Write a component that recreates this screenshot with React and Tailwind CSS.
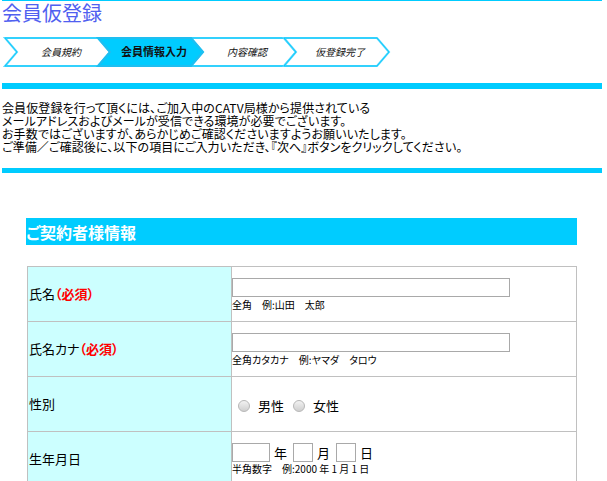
import React from 'react';

const steps = [
  { label: '会員規約', active: false },
  { label: '会員情報入力', active: true },
  { label: '内容確認', active: false },
  { label: '仮登録完了', active: false }
];

const introLines = [
  '会員仮登録を行って頂くには、ご加入中のCATV局様から提供されている',
  'メールアドレスおよびメールが受信できる環境が必要でございます。',
  'お手数ではございますが、あらかじめご確認くださいますようお願いいたします。',
  'ご準備／ご確認後に、以下の項目にご入力いただき、『次へ』ボタンをクリックしてください。'
];

function chevron(x) {
  return `${x},1 ${x + 93},1 ${x + 105},15 ${x + 93},29 ${x},29 ${x + 12},15`;
}

function StepBar() {
  const order = steps.map((s, i) => ({ ...s, i })).sort((a, b) => Number(a.active) - Number(b.active));
  return (
    <svg width="400" height="31" viewBox="0 0 400 31" className="block">
      {order.map((s) => {
        const x = 3 + s.i * 93;
        return (
          <g key={s.i}>
            <polygon
              points={chevron(x)}
              fill={s.active ? '#00ccff' : '#ffffff'}
              stroke={s.active ? '#1fbef0' : '#55d8ff'}
              strokeWidth="2"
              strokeLinejoin="miter"
            />
            {!s.active && (
              <polygon points={chevron(x)} fill="none" stroke="#00c8fa" strokeWidth="0.8" />
            )}
            <text
              x={x + 56}
              y="19"
              textAnchor="middle"
              fontSize={s.active ? 11 : 10}
              fontWeight={s.active ? 'bold' : 'normal'}
              fontStyle={s.active ? 'normal' : 'italic'}
              fill="#111"
              style={{ fontFamily: "'Noto Sans CJK JP', sans-serif" }}
            >
              {s.label}
            </text>
          </g>
        );
      })}
    </svg>
  );
}

function Radio() {
  return (
    <span className="inline-block w-[12px] h-[12px] rounded-full border border-[#b8b8b8] bg-gradient-to-b from-[#f2f2f2] to-[#cfcfcf]" />
  );
}

function Required() {
  return <span className="text-[#ff0000] font-bold">（必須）</span>;
}

function TextInput({ w }) {
  return <input type="text" className={`block h-[19px] border border-[#a9a9a9] bg-white outline-none ${w}`} />;
}

export default function App() {
  return (
    <div className="w-[600px] ml-[2px] bg-white text-black font-['Noto_Sans_CJK_JP',sans-serif] [font-feature-settings:'palt']">
      <div className="h-px bg-[#00ccff]" />
      <h1 className="text-[20px] leading-[24px] text-[#5060f0]">会員仮登録</h1>

      <div className="mt-[12px]">
        <StepBar />
      </div>

      <div className="mt-[15px] h-[6px] bg-[#00ccff]" />

      <div className="mt-[12px] text-[12px] leading-[13px] tracking-[0.1px]">
        {introLines.map((l) => (
          <div key={l}>{l}</div>
        ))}
      </div>

      <div className="mt-[15px] h-[5px] bg-[#00ccff]" />

      <div className="mt-[45px] ml-[24px] w-[551px] h-[27px] bg-[#00ccff] flex items-center text-white font-bold text-[16px] leading-none">
        ご契約者様情報
      </div>

      <table className="mt-[21px] ml-[25px] w-[550px] border-collapse border border-[#c0c0c0] text-[13px]">
        <tbody>
          <tr className="h-[55px]">
            <td className="w-[204px] border border-[#c0c0c0] bg-[#ccffff] px-[1px] align-middle">
              氏名<Required />
            </td>
            <td className="border border-[#c0c0c0] align-middle p-0">
              <TextInput w="w-[278px]" />
              <div className="text-[10px] leading-[12px] mt-[2px]">全角　例:山田　太郎</div>
            </td>
          </tr>
          <tr className="h-[55px]">
            <td className="border border-[#c0c0c0] bg-[#ccffff] px-[1px] align-middle">
              氏名カナ<Required />
            </td>
            <td className="border border-[#c0c0c0] align-middle p-0">
              <TextInput w="w-[278px]" />
              <div className="text-[10px] leading-[12px] mt-[2px]">全角カタカナ　例:ヤマダ　タロウ</div>
            </td>
          </tr>
          <tr className="h-[55px]">
            <td className="border border-[#c0c0c0] bg-[#ccffff] px-[1px] align-middle">性別</td>
            <td className="border border-[#c0c0c0] align-middle p-0">
              <div className="flex items-center pl-[6px] pt-[3px]">
                <Radio />
                <span className="ml-[8px]">男性</span>
                <span className="ml-[9px] flex"><Radio /></span>
                <span className="ml-[8px]">女性</span>
              </div>
            </td>
          </tr>
          <tr className="h-[55px]">
            <td className="border border-[#c0c0c0] bg-[#ccffff] px-[1px] align-middle">生年月日</td>
            <td className="border border-[#c0c0c0] align-middle p-0">
              <div className="flex items-center">
                <TextInput w="w-[38px]" />
                <span className="ml-[4px]">年</span>
                <span className="ml-[6px]"><TextInput w="w-[20px]" /></span>
                <span className="ml-[4px]">月</span>
                <span className="ml-[6px]"><TextInput w="w-[20px]" /></span>
                <span className="ml-[4px]">日</span>
              </div>
              <div className="text-[10px] leading-[12px] mt-[1px]">半角数字　例:2000 年 1 月 1 日</div>
            </td>
          </tr>
        </tbody>
      </table>
    </div>
  );
}
